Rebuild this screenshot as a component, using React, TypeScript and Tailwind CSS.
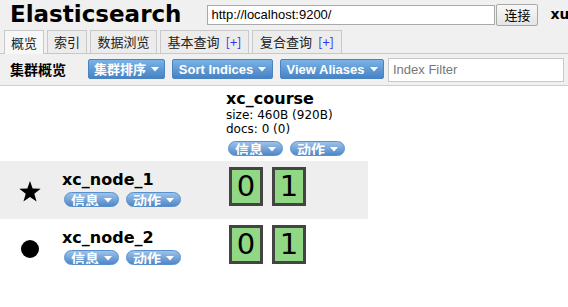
const Caret = () => (
  <svg width="8" height="5" viewBox="0 0 8 5" className="ml-[5px] shrink-0">
    <path d="M0 0 L8 0 L4 4.5 Z" fill="#ffffff" />
  </svg>
);

const ToolButton = ({ label, width }: { label: string; width: string }) => (
  <button
    className={`${width} shrink-0 h-[20px] flex items-center justify-center rounded-[2px] border border-[#4b82c0] bg-linear-to-b from-[#7bb3e6] to-[#4683c5] text-white font-bold text-[13px] leading-none font-['Liberation_Sans','Noto_Sans_CJK_SC',sans-serif]`}
  >
    {label}
    <Caret />
  </button>
);

const Pill = ({ label }: { label: string }) => (
  <div className="w-[55px] h-[15px] shrink-0 overflow-hidden flex items-start justify-center rounded-full border border-[#5a8fcb] bg-linear-to-b from-[#9cc3ea] to-[#4f88c8] text-white font-bold text-[14px] leading-[16px] font-['Liberation_Sans','Noto_Sans_CJK_SC',sans-serif]">
    {label}
    <span className="mt-[5px]">
      <Caret />
    </span>
  </div>
);

const Shard = ({ n }: { n: string }) => (
  <div className="w-[34px] h-[39px] shrink-0 border-[3px] border-[#444444] bg-[#90d884] flex items-center justify-center text-[29px] leading-none text-black font-['DejaVu_Sans',sans-serif]">
    {n}
  </div>
);

const Tab = ({ label, width, active, plus }: { label: string; width: string; active?: boolean; plus?: boolean }) => (
  <div
    className={`${width} shrink-0 h-[23px] border border-[#c8c8c8] border-b-0 flex items-center justify-center text-[13px] text-[#222] ${
      active ? 'bg-[#f7f7f7] h-[24px] -mb-px' : 'bg-[#ececec]'
    }`}
  >
    {label}
    {plus && <span className="ml-[6px] text-[#3333ee]">[+]</span>}
  </div>
);

const NodeRow = ({ name, icon, gray }: { name: string; icon: 'star' | 'dot'; gray?: boolean }) => (
  <div className={`w-[368px] h-[58px] flex ${gray ? 'bg-[#eeeeee]' : 'bg-white'}`}>
    <div className="w-[60px] shrink-0 flex items-center justify-center pt-[2px]">
      {icon === 'star' ? (
        <svg width="22" height="21" viewBox="0 0 24 23">
          <path d="M12 0 L14.9 8.3 L23.7 8.5 L16.7 13.9 L19.2 22.4 L12 17.4 L4.8 22.4 L7.3 13.9 L0.3 8.5 L9.1 8.3 Z" fill="#000" />
        </svg>
      ) : (
        <div className="w-[18px] h-[18px] rounded-full bg-black" />
      )}
    </div>
    <div className="w-[166px] shrink-0 pt-[9px] pl-[2px]">
      <div className="text-[16px] font-bold leading-[20px] text-black font-['DejaVu_Sans',sans-serif]">{name}</div>
      <div className="flex gap-[7px] mt-[2px] ml-[2px]">
        <Pill label="信息" />
        <Pill label="动作" />
      </div>
    </div>
    <div className="flex gap-[9px] pt-[6px] pl-[3px]">
      <Shard n="0" />
      <Shard n="1" />
    </div>
  </div>
);

export default function App() {
  return (
    <div className="w-[568px] h-[307px] overflow-hidden bg-white font-['DejaVu_Sans','Noto_Sans_CJK_SC',sans-serif]">
      <div className="bg-[#f0f0f0] border-b border-[#cfcfcf]">
        <div className="h-[29px] flex items-center pl-[10px] whitespace-nowrap">
          <div className="shrink-0 text-[23px] font-bold leading-none text-black">Elasticsearch</div>
          <div className="shrink-0 ml-[26px] w-[288px] h-[20px] border border-[#a9a9a9] bg-white flex items-center pl-[3px] text-[13px] text-black font-['Liberation_Sans',sans-serif]">
            http://localhost:9200/
          </div>
          <button className="shrink-0 ml-px w-[42px] h-[22px] border border-[#a8a8a8] rounded-[2px] bg-linear-to-b from-[#f8f8f8] to-[#e4e4e4] text-[13px] text-black font-['Noto_Sans_CJK_SC',sans-serif]">
            连接
          </button>
          <div className="shrink-0 ml-[12px] text-[14px] font-bold text-black">xuecheng</div>
        </div>
        <div className="mt-px flex items-end gap-[3px] pl-[4px] border-b border-[#c8c8c8] font-['Noto_Sans_CJK_SC',sans-serif]">
          <Tab label="概览" width="w-[40px]" active />
          <Tab label="索引" width="w-[40px]" />
          <Tab label="数据浏览" width="w-[67px]" />
          <Tab label="基本查询" width="w-[89px]" plus />
          <Tab label="复合查询" width="w-[90px]" plus />
        </div>
        <div className="h-[31px] flex items-center pl-[10px]">
          <div className="w-[78px] shrink-0 text-[14px] font-bold text-black font-['Noto_Sans_CJK_SC',sans-serif]">集群概览</div>
          <div className="flex gap-[7px] -mt-px">
            <ToolButton label="集群排序" width="w-[77px]" />
            <ToolButton label="Sort Indices" width="w-[101px]" />
            <ToolButton label="View Aliases" width="w-[104px]" />
          </div>
          <div className="shrink-0 ml-[4px] w-[176px] h-[24px] border border-[#c8c8c8] bg-white flex items-center pl-[4px] text-[13px] text-[#777] font-['Liberation_Sans',sans-serif]">
            Index Filter
          </div>
        </div>
      </div>

      <div className="h-[75px] flex">
        <div className="w-[226px] shrink-0" />
        <div className="pt-[3px]">
          <div className="text-[16px] font-bold leading-[19px] text-black">xc_course</div>
          <div className="text-[12px] leading-[14px] text-black">size: 460B (920B)</div>
          <div className="text-[12px] leading-[14px] text-black">docs: 0 (0)</div>
          <div className="flex gap-[7px] mt-[5px] ml-[2px]">
            <Pill label="信息" />
            <Pill label="动作" />
          </div>
        </div>
      </div>

      <NodeRow name="xc_node_1" icon="star" gray />
      <NodeRow name="xc_node_2" icon="dot" />
    </div>
  );
}
